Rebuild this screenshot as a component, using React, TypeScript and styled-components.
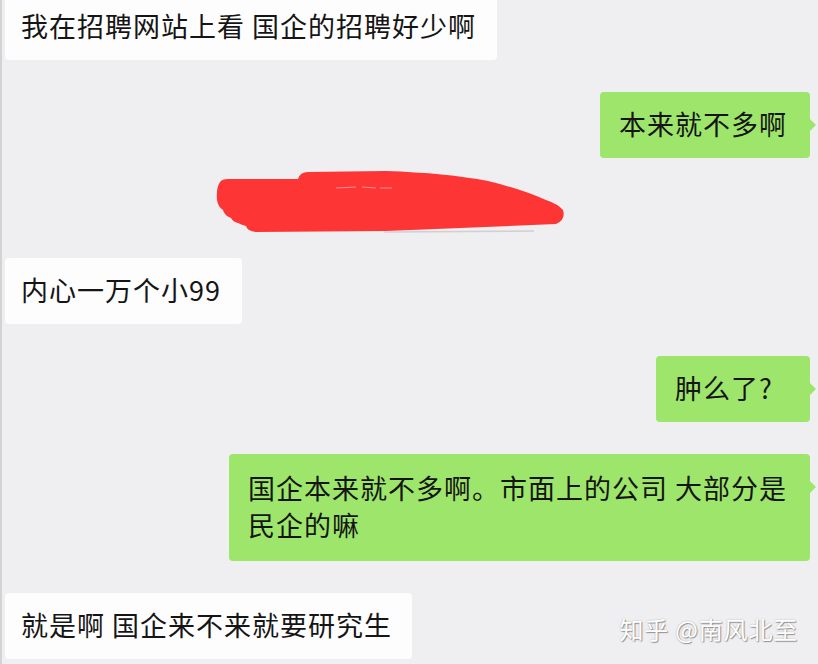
import styled, { createGlobalStyle } from "styled-components";

const GlobalStyle = createGlobalStyle`
  html, body {
    margin: 0;
    padding: 0;
    background: #efeef1;
  }
  body {
    font-family: "Noto Sans CJK SC", "Noto Sans", sans-serif;
  }
`;

const Screen = styled.div`
  position: relative;
  width: 818px;
  height: 664px;
  overflow: hidden;
  background: #efeef1;
  border-left: 2px solid #d3d3d6;
  box-sizing: border-box;
`;

const Thread = styled.div`
  display: flex;
  flex-direction: column;
  gap: 32px;
  margin-top: -6px;
`;

const Row = styled.div<{ $mine?: boolean }>`
  display: flex;
  justify-content: ${(p) => (p.$mine ? "flex-end" : "flex-start")};
  padding: ${(p) => (p.$mine ? "0 8px 0 0" : "0 0 0 3px")};
`;

const Bubble = styled.div<{ $mine?: boolean; $width?: number; $tall?: boolean }>`
  position: relative;
  box-sizing: border-box;
  width: ${(p) => (p.$width ? `${p.$width}px` : "auto")};
  padding: ${(p) => (p.$tall ? "15px 0 18px" : "13px 0 16px")};
  padding-left: ${(p) => (p.$mine ? "19px" : "16px")};
  border-radius: 4px;
  background: ${(p) => (p.$mine ? "#9de66b" : "#fdfdfd")};
  color: #151515;
  font-size: 27px;
  line-height: 37px;
  letter-spacing: 1px;
  white-space: nowrap;

  &::after {
    content: "";
    display: ${(p) => (p.$mine ? "block" : "none")};
    position: absolute;
    right: -6px;
    top: 27px;
    border-top: 6px solid transparent;
    border-bottom: 6px solid transparent;
    border-left: 6px solid #9de66b;
  }
`;

const Line = styled.div`
  display: block;
`;

const Redacted = styled.div`
  height: 64px;
  margin: -20px 0 -8px 0;
  padding-left: 214px;
`;

const Watermark = styled.div`
  position: absolute;
  right: 20px;
  bottom: 18px;
  color: #ffffff;
  font-size: 24px;
  letter-spacing: 0.8px;
  text-shadow: 1px 1px 1px rgba(0, 0, 0, 0.35), 0 0 2px rgba(0, 0, 0, 0.25);
`;

const Scribble = () => (
  <svg width="352" height="64" viewBox="0 0 352 64">
    <line x1="168" y1="62" x2="318" y2="61" stroke="#cfcfd4" strokeWidth="1.5" />
    <path
      d="M4 12 Q6 9 12 9 L82 9 Q84 2 92 2 L170 1 Q230 3 272 11 Q305 19 330 30 Q342 34 347 40 Q350 50 340 54 L170 61 L40 62 Q31 61 30 56 Q26 55 22 53 Q17 52 15 48 Q8 45 7 40 Q2 37 1 30 Q0 18 4 12 Z"
      fill="#fd3535"
    />
    <path d="M120 18 L140 17 M146 17 L160 18 M164 18 L176 18" stroke="#ff8f8f" strokeWidth="1.2" />
  </svg>
);

const App = () => (
  <>
    <GlobalStyle />
    <Screen>
      <Thread>
        <Row>
          <Bubble $width={492}>我在招聘网站上看 国企的招聘好少啊</Bubble>
        </Row>
        <Row $mine>
          <Bubble $mine $width={210}>本来就不多啊</Bubble>
        </Row>
        <Redacted>
          <Scribble />
        </Redacted>
        <Row>
          <Bubble $width={237}>内心一万个小99</Bubble>
        </Row>
        <Row $mine>
          <Bubble $mine $width={154}>肿么了?</Bubble>
        </Row>
        <Row $mine>
          <Bubble $mine $tall $width={581}>
            <Line>国企本来就不多啊。市面上的公司 大部分是</Line>
            <Line>民企的嘛</Line>
          </Bubble>
        </Row>
        <Row>
          <Bubble $width={407}>就是啊 国企来不来就要研究生</Bubble>
        </Row>
      </Thread>
      <Watermark>知乎 @南风北至</Watermark>
    </Screen>
  </>
);

export default App;
